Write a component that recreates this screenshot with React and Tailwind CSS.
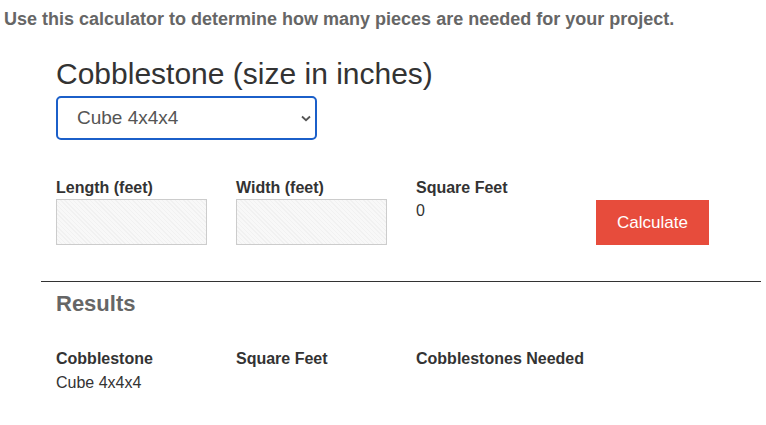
import React from 'react';

const Calculator = () => {
  return (
    <div className="min-h-[425px] bg-white font-['Liberation_Sans',Arial,sans-serif]">
      <p className="pl-[4px] pt-[7px] text-[18px] leading-[24px] font-bold text-[#666]">
        Use this calculator to determine how many pieces are needed for your project.
      </p>

      <div className="ml-[41px] w-[720px]">
        <div className="px-[15px]">
          <h2 className="mt-[25px] text-[30px] leading-[35px] text-[#333]">Cobblestone (size in inches)</h2>
          <div className="relative mt-[5px] w-[261px]">
            <select className="h-[44px] w-full appearance-none rounded-[5px] border-2 border-[#1b5fc9] bg-white pl-[19px] text-[19px] text-[#555] outline-none">
              <option>Cube 4x4x4</option>
            </select>
            <svg className="pointer-events-none absolute right-[6px] top-[19px]" width="10" height="7" viewBox="0 0 10 7">
              <path d="M1 1.5 L5 5.2 L9 1.5" fill="none" stroke="#555" strokeWidth="1.8" />
            </svg>
          </div>

          <div className="mt-[38px] grid grid-cols-[180px_180px_180px_180px] pb-[36px]">
            <div>
              <label className="block text-[16px] leading-[19px] font-bold text-[#333]">Length (feet)</label>
              <input className="mt-[2px] h-[46px] w-[151px] border border-[#ccc] bg-[#f7f7f7] bg-[repeating-linear-gradient(45deg,#f1f1f1_0px,#f1f1f1_1px,#f8f8f8_1px,#f8f8f8_3px)]" />
            </div>
            <div>
              <label className="block text-[16px] leading-[19px] font-bold text-[#333]">Width (feet)</label>
              <input className="mt-[2px] h-[46px] w-[151px] border border-[#ccc] bg-[#f7f7f7] bg-[repeating-linear-gradient(45deg,#f1f1f1_0px,#f1f1f1_1px,#f8f8f8_1px,#f8f8f8_3px)]" />
            </div>
            <div>
              <div className="text-[16px] leading-[19px] font-bold text-[#333]">Square Feet</div>
              <div className="mt-[4px] text-[16px] leading-[19px] text-[#333]">0</div>
            </div>
            <div className="pt-[22px]">
              <button className="h-[45px] w-[113px] bg-[#e74c3c] text-[17px] text-white">Calculate</button>
            </div>
          </div>
        </div>

        <div className="h-px bg-[#333]" />

        <div className="px-[15px]">
          <h3 className="mt-[9px] text-[22px] leading-[26px] font-bold text-[#666]">Results</h3>
          <div className="mt-[32px] grid grid-cols-[180px_180px_180px]">
            <div>
              <div className="text-[16px] leading-[19px] font-bold text-[#333]">Cobblestone</div>
              <div className="mt-[5px] text-[16px] leading-[19px] text-[#333]">Cube 4x4x4</div>
            </div>
            <div className="text-[16px] leading-[19px] font-bold text-[#333]">Square Feet</div>
            <div className="text-[16px] leading-[19px] font-bold text-[#333]">Cobblestones Needed</div>
          </div>
        </div>
      </div>
    </div>
  );
};

export default function App() {
  return <Calculator />;
}
